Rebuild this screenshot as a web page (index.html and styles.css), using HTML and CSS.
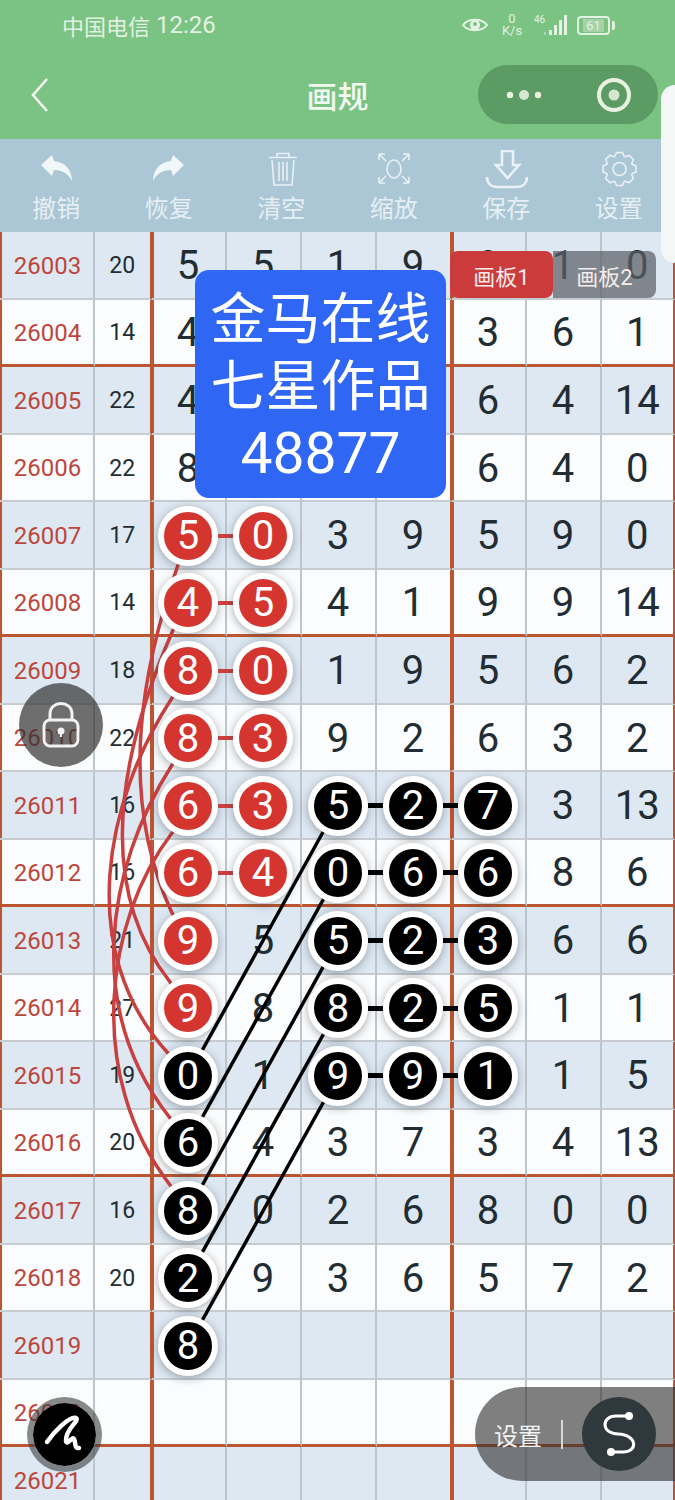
FILE: index.html
```html
<!DOCTYPE html>
<html lang="zh-CN">
<head>
    <meta charset="UTF-8">
    <meta name="viewport" content="width=device-width, initial-scale=1.0">
    <title>画规</title>
    <link rel="stylesheet" href="styles.css">
</head>
<body>
<div class="screen">
    <div class="header">
        <div class="status">
            <div class="carrier">中国电信<span class="time">12:26</span></div>
            <div class="status-icons">
                <svg class="eye" width="26" height="16" viewBox="0 0 26 16">
                    <path d="M1 8C6 1 20 1 25 8C20 15 6 15 1 8Z" fill="none" stroke="#e6f3e4" stroke-width="2"/>
                    <circle cx="13" cy="8" r="5" fill="#e6f3e4"/>
                    <circle cx="13" cy="7" r="2" fill="#7bc383"/>
                </svg>
                <div class="speed"><span>0</span><span>K/s</span></div>
                <svg class="signal" width="34" height="20" viewBox="0 0 34 20">
                    <text x="0" y="8" class="signal-text">46</text>
                    <rect x="10" y="17" width="2" height="3" fill="#a9d8ae"/>
                    <rect x="15" y="15" width="3" height="5" fill="#e6f3e4"/>
                    <rect x="20" y="10" width="3" height="10" fill="#e6f3e4"/>
                    <rect x="25" y="5" width="3" height="15" fill="#e6f3e4"/>
                    <rect x="30" y="0" width="3" height="20" fill="#e6f3e4"/>
                </svg>
                <div class="battery"><span>61</span></div>
            </div>
        </div>
        <div class="nav">
            <svg class="back" width="18" height="34" viewBox="0 0 18 34">
                <path d="M16 1L2 17L16 33" fill="none" stroke="#f2f8f0" stroke-width="2.6"/>
            </svg>
            <div class="title">画规</div>
            <div class="capsule">
                <svg width="40" height="14" viewBox="0 0 40 14">
                    <circle cx="6" cy="7" r="3.2" fill="#e8f2e0"/>
                    <circle cx="20" cy="7" r="5" fill="#d6e6cf"/>
                    <circle cx="34" cy="7" r="3.2" fill="#e8f2e0"/>
                </svg>
                <svg width="36" height="36" viewBox="0 0 36 36">
                    <circle cx="18" cy="18" r="15" fill="none" stroke="#e8f2e0" stroke-width="4"/>
                    <circle cx="18" cy="18" r="5.5" fill="#d6e6cf"/>
                </svg>
            </div>
        </div>
    </div>

    <div class="toolbar">
        <div class="tool">
            <svg width="44" height="40" viewBox="0 0 44 40"><path class="solid" d="M7 15L18 5L20 11C31 12 38 20 38 31C34 23 27 20 20 20L18 26Z"/></svg>
            <span>撤销</span>
        </div>
        <div class="tool">
            <svg width="44" height="40" viewBox="0 0 44 40"><path class="solid" transform="matrix(-1 0 0 1 44 0)" d="M7 15L18 5L20 11C31 12 38 20 38 31C34 23 27 20 20 20L18 26Z"/></svg>
            <span>恢复</span>
        </div>
        <div class="tool">
            <svg width="44" height="40" viewBox="0 0 44 40">
                <path class="line" d="M18 7V3.5H30V7M10 7.5H38M13 10L15 35H33L35 10M20 12V31M24 12V31M28 12V31"/>
            </svg>
            <span>清空</span>
        </div>
        <div class="tool">
            <svg width="44" height="40" viewBox="0 0 44 40">
                <path class="line" d="M7 4H13M7 4V10M7 4L14 11M37 4H31M37 4V10M37 4L30 11M7 33H13M7 33V27M7 33L14 26M37 33H31M37 33V27M37 33L30 26"/>
                <ellipse class="line" cx="22" cy="19" rx="7" ry="9"/>
            </svg>
            <span>缩放</span>
        </div>
        <div class="tool">
            <svg width="44" height="40" viewBox="0 0 44 40">
                <path class="line thick" d="M18 1H29V15H35L23.5 28L12 15H18Z"/>
                <path class="line thick" d="M3 27C3 34 8 37 14 37H32C38 37 43 34 43 27"/>
            </svg>
            <span>保存</span>
        </div>
        <div class="tool">
            <svg width="44" height="40" viewBox="0 0 44 40">
                <defs><path id="tooth" d="M-5 -12L-3 -16.5H3L5 -12"/></defs>
                <g class="line" transform="translate(22.5 19)">
                    <use href="#tooth"/>
                    <use href="#tooth" transform="rotate(45)"/>
                    <use href="#tooth" transform="rotate(90)"/>
                    <use href="#tooth" transform="rotate(135)"/>
                    <use href="#tooth" transform="rotate(180)"/>
                    <use href="#tooth" transform="rotate(225)"/>
                    <use href="#tooth" transform="rotate(270)"/>
                    <use href="#tooth" transform="rotate(315)"/>
                    <circle r="6.5"/>
                </g>
            </svg>
            <span>设置</span>
        </div>
    </div>

    <div class="board">
        <div class="row"><div class="issue">26003</div><div class="sum">20</div><div class="cell">5</div><div class="cell">5</div><div class="cell">1</div><div class="cell">9</div><div class="cell">8</div><div class="cell">1</div><div class="cell">0</div></div>
        <div class="row end"><div class="issue">26004</div><div class="sum">14</div><div class="cell">4</div><div class="cell"></div><div class="cell"></div><div class="cell"></div><div class="cell">3</div><div class="cell">6</div><div class="cell">1</div></div>
        <div class="row"><div class="issue">26005</div><div class="sum">22</div><div class="cell">4</div><div class="cell"></div><div class="cell"></div><div class="cell"></div><div class="cell">6</div><div class="cell">4</div><div class="cell">14</div></div>
        <div class="row"><div class="issue">26006</div><div class="sum">22</div><div class="cell">8</div><div class="cell"></div><div class="cell"></div><div class="cell"></div><div class="cell">6</div><div class="cell">4</div><div class="cell">0</div></div>
        <div class="row"><div class="issue">26007</div><div class="sum">17</div><div class="cell"><b class="ball red link">5</b></div><div class="cell"><b class="ball red">0</b></div><div class="cell">3</div><div class="cell">9</div><div class="cell">5</div><div class="cell">9</div><div class="cell">0</div></div>
        <div class="row end"><div class="issue">26008</div><div class="sum">14</div><div class="cell"><b class="ball red link">4</b></div><div class="cell"><b class="ball red">5</b></div><div class="cell">4</div><div class="cell">1</div><div class="cell">9</div><div class="cell">9</div><div class="cell">14</div></div>
        <div class="row"><div class="issue">26009</div><div class="sum">18</div><div class="cell"><b class="ball red link">8</b></div><div class="cell"><b class="ball red">0</b></div><div class="cell">1</div><div class="cell">9</div><div class="cell">5</div><div class="cell">6</div><div class="cell">2</div></div>
        <div class="row"><div class="issue">26010</div><div class="sum">22</div><div class="cell"><b class="ball red link">8</b></div><div class="cell"><b class="ball red">3</b></div><div class="cell">9</div><div class="cell">2</div><div class="cell">6</div><div class="cell">3</div><div class="cell">2</div></div>
        <div class="row"><div class="issue">26011</div><div class="sum">16</div><div class="cell"><b class="ball red link">6</b></div><div class="cell"><b class="ball red">3</b></div><div class="cell"><b class="ball black link">5</b></div><div class="cell"><b class="ball black link">2</b></div><div class="cell"><b class="ball black">7</b></div><div class="cell">3</div><div class="cell">13</div></div>
        <div class="row end"><div class="issue">26012</div><div class="sum">16</div><div class="cell"><b class="ball red link">6</b></div><div class="cell"><b class="ball red">4</b></div><div class="cell"><b class="ball black link">0</b></div><div class="cell"><b class="ball black link">6</b></div><div class="cell"><b class="ball black">6</b></div><div class="cell">8</div><div class="cell">6</div></div>
        <div class="row"><div class="issue">26013</div><div class="sum">21</div><div class="cell"><b class="ball red">9</b></div><div class="cell">5</div><div class="cell"><b class="ball black link">5</b></div><div class="cell"><b class="ball black link">2</b></div><div class="cell"><b class="ball black">3</b></div><div class="cell">6</div><div class="cell">6</div></div>
        <div class="row"><div class="issue">26014</div><div class="sum">27</div><div class="cell"><b class="ball red">9</b></div><div class="cell">8</div><div class="cell"><b class="ball black link">8</b></div><div class="cell"><b class="ball black link">2</b></div><div class="cell"><b class="ball black">5</b></div><div class="cell">1</div><div class="cell">1</div></div>
        <div class="row"><div class="issue">26015</div><div class="sum">19</div><div class="cell"><b class="ball black">0</b></div><div class="cell">1</div><div class="cell"><b class="ball black link">9</b></div><div class="cell"><b class="ball black link">9</b></div><div class="cell"><b class="ball black">1</b></div><div class="cell">1</div><div class="cell">5</div></div>
        <div class="row end"><div class="issue">26016</div><div class="sum">20</div><div class="cell"><b class="ball black">6</b></div><div class="cell">4</div><div class="cell">3</div><div class="cell">7</div><div class="cell">3</div><div class="cell">4</div><div class="cell">13</div></div>
        <div class="row"><div class="issue">26017</div><div class="sum">16</div><div class="cell"><b class="ball black">8</b></div><div class="cell">0</div><div class="cell">2</div><div class="cell">6</div><div class="cell">8</div><div class="cell">0</div><div class="cell">0</div></div>
        <div class="row"><div class="issue">26018</div><div class="sum">20</div><div class="cell"><b class="ball black">2</b></div><div class="cell">9</div><div class="cell">3</div><div class="cell">6</div><div class="cell">5</div><div class="cell">7</div><div class="cell">2</div></div>
        <div class="row"><div class="issue">26019</div><div class="sum"></div><div class="cell"><b class="ball black">8</b></div><div class="cell"></div><div class="cell"></div><div class="cell"></div><div class="cell"></div><div class="cell"></div><div class="cell"></div></div>
        <div class="row end"><div class="issue">26020</div><div class="sum"></div><div class="cell"></div><div class="cell"></div><div class="cell"></div><div class="cell"></div><div class="cell"></div><div class="cell"></div><div class="cell"></div></div>
        <div class="row"><div class="issue">26021</div><div class="sum"></div><div class="cell"></div><div class="cell"></div><div class="cell"></div><div class="cell"></div><div class="cell"></div><div class="cell"></div><div class="cell"></div></div>
    </div>

    <!-- drawn strokes, same coordinates as the screen -->
    <svg class="strokes" width="675" height="1500" viewBox="0 0 675 1500">
        <g class="curves">
            <path d="M188 535L178 565C145 660 115 790 172 913L188 940"/>
            <path d="M188 603L173 630C125 740 90 880 170 982L188 1008"/>
            <path d="M188 670L172 698C105 800 75 950 167 1052L188 1076"/>
            <path d="M188 738L172 765C105 870 85 1010 170 1118L188 1143"/>
            <path d="M188 805L172 833C105 920 85 1075 170 1185L188 1211"/>
        </g>
        <g class="straights">
            <path d="M338 805L188 1076"/>
            <path d="M338 873L188 1143"/>
            <path d="M338 940L188 1211"/>
            <path d="M338 1008L188 1278"/>
            <path d="M338 1076L188 1346"/>
        </g>
    </svg>

    <div class="side-panel"></div>

    <div class="tabs">
        <div class="tab active">画板1</div>
        <div class="tab">画板2</div>
    </div>

    <div class="notice">
        <div>金马在线</div>
        <div>七星作品</div>
        <div class="notice-num">48877</div>
    </div>

    <div class="lock">
        <svg width="40" height="48" viewBox="0 0 40 48">
            <path d="M9 20V13C9 -1 31 -1 31 13V20" fill="none" stroke="#f2f2f2" stroke-width="3"/>
            <rect x="3" y="19" width="34" height="26" rx="6" fill="none" stroke="#f2f2f2" stroke-width="3"/>
            <circle cx="20" cy="30" r="3.5" fill="#f2f2f2"/>
            <path d="M20 31V36" stroke="#f2f2f2" stroke-width="2"/>
        </svg>
    </div>

    <div class="brush">
        <svg width="62" height="62" viewBox="0 0 62 62">
            <path d="M14 39C20 30 36 13 43 15C47 18 32 26 33 38C34 43 39 33 41 36C43 39 41 46 46 45" fill="none" stroke="#fff" stroke-width="4.5" stroke-linecap="round"/>
        </svg>
    </div>

    <div class="pill">
        <span>设置</span>
        <i class="divider"></i>
        <div class="pill-btn">
            <svg width="74" height="74" viewBox="0 0 74 74">
                <path d="M47 19H34C19 19 19 37 36 37C56 38 56 55 41 55H29" fill="none" stroke="#fff" stroke-width="3"/>
                <circle cx="47" cy="19" r="4" fill="#fff"/>
                <circle cx="29" cy="55" r="4" fill="#fff"/>
            </svg>
        </div>
    </div>
</div>
</body>
</html>
```

FILE: styles.css
```css
* {
    box-sizing: border-box;
}

body {
    margin: 0;
    padding: 0;
    font-family: Roboto, 'Noto Sans CJK SC', sans-serif;
    background: #fff;
    color: #222d33;
}

.screen {
    position: relative;
    width: 675px;
    height: 1500px;
    overflow: hidden;
}

/* Header Section */
.header {
    background-color: #7bc383;
    height: 139px;
}

.status {
    display: flex;
    justify-content: space-between;
    align-items: center;
    height: 50px;
    padding: 0 60px 0 62px;
    color: #e2f1e1;
}

.carrier {
    display: flex;
    align-items: center;
    font-size: 22px;
}

.carrier .time {
    margin-left: 6px;
    font-size: 24px;
}

.status-icons {
    display: flex;
    align-items: center;
}

.speed {
    display: flex;
    flex-direction: column;
    align-items: center;
    width: 24px;
    margin-left: 12px;
    font-size: 13px;
    line-height: 12px;
}

.signal {
    margin-left: 10px;
}

.signal-text {
    font-size: 10px;
    fill: #e6f3e4;
}

.battery {
    position: relative;
    display: flex;
    align-items: center;
    justify-content: center;
    width: 33px;
    height: 19px;
    margin-left: 9px;
    margin-right: 5px;
    border: 2px solid #e2f1e1;
    border-radius: 4px;
    font-size: 13px;
}

.battery span {
    padding: 0 3px;
    background-color: #a5d3a6;
    line-height: 13px;
}

.battery::after {
    content: '';
    position: absolute;
    right: -7px;
    top: 3px;
    width: 3px;
    height: 9px;
    border-radius: 0 2px 2px 0;
    background-color: #e2f1e1;
}

.nav {
    display: grid;
    grid-template-columns: 1fr auto 1fr;
    align-items: center;
    height: 89px;
    padding: 0 17px;
}

.back {
    margin-left: 14px;
}

.title {
    font-size: 31px;
    font-weight: 500;
    color: #f2f8f0;
}

.capsule {
    display: flex;
    align-items: center;
    justify-content: space-between;
    justify-self: end;
    width: 180px;
    height: 59px;
    padding: 0 26px;
    border-radius: 30px;
    background-color: #5c9b64;
}

.toolbar {
    display: grid;
    grid-template-columns: repeat(6, 1fr);
    height: 93px;
    padding-top: 11px;
    background-color: #abc6d5;
}

.tool {
    display: flex;
    flex-direction: column;
    align-items: center;
    gap: 2px;
    font-size: 24px;
    line-height: 34px;
    color: #e6eff4;
}

.solid {
    fill: #f1f6f9;
}

.line {
    fill: none;
    stroke: #e9f1f6;
    stroke-width: 1.6;
}

.line.thick {
    stroke-width: 2.6;
}

/* Lottery table */
.row {
    display: grid;
    grid-template-columns: 95px 56.5px repeat(6, 75px) 73.5px;
    height: 67.5px;
    background-color: #fbfcfd;
}

.row:nth-child(odd) {
    background-color: #dde8f2;
}

.row > div {
    display: flex;
    align-items: center;
    justify-content: center;
    padding-top: 2px;
    border-right: 2px solid #bcc5ca;
    border-bottom: 2px solid #c6ccd0;
}

.row.end > div {
    border-bottom: 3px solid #bb5630;
}

.issue {
    box-shadow: inset 2px 0 0 #bb5630;
    padding-left: 2px;
    font-size: 24px;
    color: #bd463c;
}

.row > .sum {
    border-right-color: #bb5630;
    font-size: 23px;
}

.cell {
    font-size: 40px;
}

.cell:nth-child(3),
.cell:nth-child(7) {
    box-shadow: inset 2px 0 0 #bb5630;
}

.row > .cell:nth-child(6) {
    border-right-color: #bb5630;
}

.row > .cell:last-child {
    border-right-color: #bb5630;
}

.ball {
    position: relative;
    z-index: 2;
    display: flex;
    align-items: center;
    justify-content: center;
    width: 60px;
    height: 60px;
    border: 6px solid #fff;
    border-radius: 50%;
    box-shadow: 0 2px 10px rgba(40, 50, 60, 0.4);
    font-size: 40px;
    font-weight: 400;
    color: #fff;
}

.ball.red {
    background-color: #d5352f;
}

.ball.black {
    background-color: #000;
}

.ball.link::after {
    content: '';
    position: absolute;
    left: calc(100% + 6px);
    top: calc(50% - 2px);
    width: 15px;
    height: 4px;
}

.ball.red.link::after {
    background-color: #c8403f;
}

.ball.black.link::after {
    top: calc(50% - 2.5px);
    height: 5px;
    background-color: #000;
}

.strokes {
    position: absolute;
    left: 0;
    top: 0;
    z-index: 1;
    pointer-events: none;
}

.curves path {
    fill: none;
    stroke: #c8403f;
    stroke-width: 3.5;
}

.straights path {
    fill: none;
    stroke: #000;
    stroke-width: 3.5;
}

/* Floating things */
.side-panel {
    position: absolute;
    left: 661px;
    top: 85px;
    z-index: 3;
    width: 14px;
    height: 178px;
    border-radius: 14px 0 0 14px;
    background-color: #f5f6f6;
}

.tabs {
    position: absolute;
    left: 450px;
    top: 251px;
    z-index: 4;
    display: flex;
    height: 47px;
    font-size: 22px;
    color: #f6ecec;
}

.tab {
    display: flex;
    align-items: center;
    justify-content: center;
    width: 103px;
    border-radius: 0 8px 8px 0;
    background-color: rgba(90, 96, 102, 0.72);
}

.tab.active {
    position: relative;
    border-radius: 8px;
    background-color: #cc3b3b;
}

.notice {
    position: absolute;
    left: 195px;
    top: 270px;
    z-index: 4;
    display: flex;
    flex-direction: column;
    align-items: center;
    justify-content: center;
    width: 251px;
    height: 228px;
    padding-top: 4px;
    border-radius: 14px;
    background-color: #2f66f4;
    font-size: 55px;
    line-height: 67px;
    color: #fff;
}

.notice-num {
    font-size: 57px;
}

.lock {
    position: absolute;
    left: 19px;
    top: 683px;
    z-index: 4;
    display: flex;
    align-items: center;
    justify-content: center;
    width: 84px;
    height: 84px;
    border-radius: 50%;
    background-color: rgba(50, 50, 50, 0.7);
}

.brush {
    position: absolute;
    left: 27px;
    top: 1397px;
    z-index: 4;
    width: 75px;
    height: 75px;
    border: 6.5px solid rgba(60, 60, 60, 0.6);
    border-radius: 50%;
    background-color: #000;
    background-clip: padding-box;
}

.pill {
    position: absolute;
    left: 475px;
    top: 1387px;
    z-index: 4;
    display: flex;
    align-items: center;
    width: 200px;
    height: 94px;
    padding-left: 19px;
    border-radius: 47px 0 0 47px;
    background-color: rgba(50, 50, 50, 0.62);
    font-size: 24px;
    color: #f2f2f2;
}

.divider {
    width: 2px;
    height: 29px;
    margin: 0 19px;
    background-color: #d8d8d8;
}

.pill-btn {
    width: 74px;
    height: 74px;
    border-radius: 50%;
    background-color: #2f383c;
}
```
